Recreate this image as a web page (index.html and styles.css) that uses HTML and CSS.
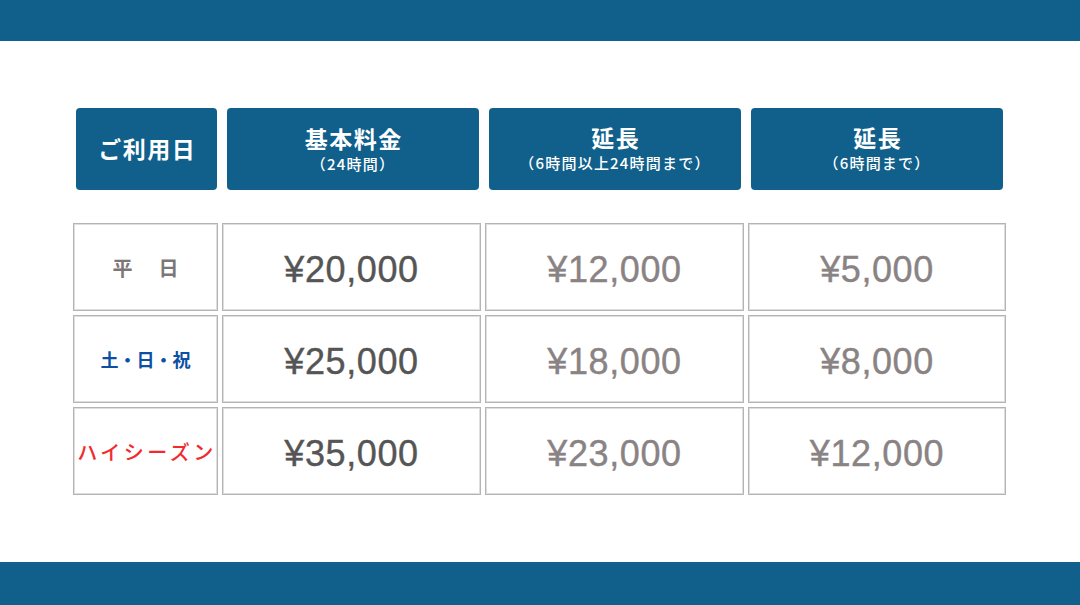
FILE: index.html
```html
<!DOCTYPE html>
<html lang="ja">
<head>
<meta charset="utf-8">
<link rel="stylesheet" href="styles.css">
</head>
<body>
<div class="topbar"></div>
<main class="content">
  <div class="heads">
    <div class="head"><div class="h-title">ご利用日</div></div>
    <div class="head"><div class="h-title">基本料金</div><div class="h-sub">（24時間）</div></div>
    <div class="head ext"><div class="h-title">延長</div><div class="h-sub">（6時間以上24時間まで）</div></div>
    <div class="head ext"><div class="h-title">延長</div><div class="h-sub">（6時間まで）</div></div>
  </div>
  <div class="grid">
    <div class="cell label weekday">平　日</div>
    <div class="cell price main">¥20,000</div>
    <div class="cell price sub">¥12,000</div>
    <div class="cell price sub">¥5,000</div>

    <div class="cell label holiday">土・日・祝</div>
    <div class="cell price main">¥25,000</div>
    <div class="cell price sub">¥18,000</div>
    <div class="cell price sub">¥8,000</div>

    <div class="cell label high">ハイシーズン</div>
    <div class="cell price main">¥35,000</div>
    <div class="cell price sub">¥23,000</div>
    <div class="cell price sub">¥12,000</div>
  </div>
</main>
<div class="bottombar"></div>
</body>
</html>
```

FILE: styles.css
```css
* { box-sizing: border-box; }
html, body { margin: 0; padding: 0; background: #fff; }
body {
  width: 1080px;
  height: 605px;
  display: flex;
  flex-direction: column;
  font-family: "Noto Sans CJK JP", "Noto Sans", sans-serif;
  overflow: hidden;
}
.topbar { height: 41px; background: #10608b; flex: none; }
.bottombar { height: 43px; background: #10608b; flex: none; }
.content {
  flex: 1;
  padding-top: 67px;
  padding-left: 73px;
}
.heads {
  display: grid;
  grid-template-columns: 141px 252px 252px 252px;
  column-gap: 10px;
  margin-left: 3px;
}
.head {
  height: 82px;
  background: #10608b;
  border-radius: 4px;
  color: #fff;
  display: flex;
  flex-direction: column;
  align-items: center;
  justify-content: center;
  padding-bottom: 2px;
}
.head.ext { padding-bottom: 4px; }
.h-title {
  font-size: 23px;
  font-weight: 700;
  line-height: 30px;
  letter-spacing: 1.5px;
  padding-left: 1.5px;
}
.h-sub {
  font-size: 15px;
  font-weight: 500;
  line-height: 20px;
  letter-spacing: 1.2px;
  margin-top: 1px;
}
.grid {
  margin-top: 33px;
  display: grid;
  grid-template-columns: 145px 259px 259px 258px;
  grid-auto-rows: 88px;
  gap: 4px;
}
.cell {
  border: 1px solid #b4b4b4;
  box-shadow: inset 0 0 0 1px #dedede;
  display: flex;
  align-items: center;
  justify-content: center;
}
.label {
  font-weight: 700;
  font-size: 20px;
}
.weekday { color: #7d7677; letter-spacing: 3px; padding-left: 3px; }
.holiday { color: #0d4fa3; font-size: 18px; }
.high { color: #f22a2e; font-weight: 500; font-size: 20px; letter-spacing: 3.5px; padding-left: 3px; }
.price {
  font-family: "Liberation Sans", Arial, sans-serif;
  font-size: 36px;
  letter-spacing: 0.6px;
  -webkit-text-stroke: 0.4px currentColor;
  padding-top: 5px;
}
.price.main { color: #555555; }
.price.sub { color: #8a8384; }
```
